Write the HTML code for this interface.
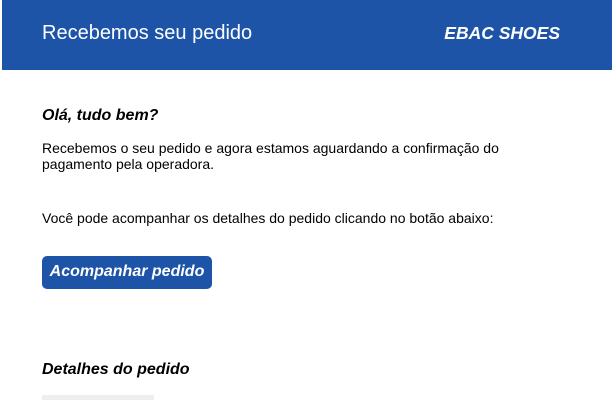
<!DOCTYPE html>
<html><head><meta charset="utf-8"><style>
body{margin:0;width:615px;height:400px;overflow:hidden;background:#fff;font-family:"Liberation Sans",Arial,sans-serif;color:#000}
.hd{position:absolute;left:2px;top:0;width:610px;height:70px;background:#1d54a8;color:#fff}
.t1{position:absolute;left:40px;top:22px;font-size:20px}
.t2{position:absolute;right:52px;top:23px;font-size:17.5px;font-weight:bold;font-style:italic}
.p{position:absolute;left:42px;font-size:14px;line-height:16px}
.h{position:absolute;left:42px;font-size:16px;font-weight:bold;font-style:italic}
.btn{position:absolute;left:42px;top:256px;width:170px;height:33px;background:#1d54a8;border-radius:5px;color:#fff;font-weight:bold;font-style:italic;font-size:16px;line-height:32px;text-align:center}
.g{position:absolute;left:42px;top:395px;width:112px;height:5px;background:#eee}
</style></head><body>
<div class="hd"><div class="t1">Recebemos seu pedido</div><div class="t2">EBAC SHOES</div></div>
<div class="h" style="top:107px">Olá, tudo bem?</div>
<div class="p" style="top:140px">Recebemos o seu pedido e agora estamos aguardando a confirmação do<br>pagamento pela operadora.</div>
<div class="p" style="top:210px">Você pode acompanhar os detalhes do pedido clicando no botão abaixo:</div>
<div class="btn">Acompanhar pedido</div>
<div class="h" style="top:361px">Detalhes do pedido</div>
<div class="g"></div>
</body></html>
